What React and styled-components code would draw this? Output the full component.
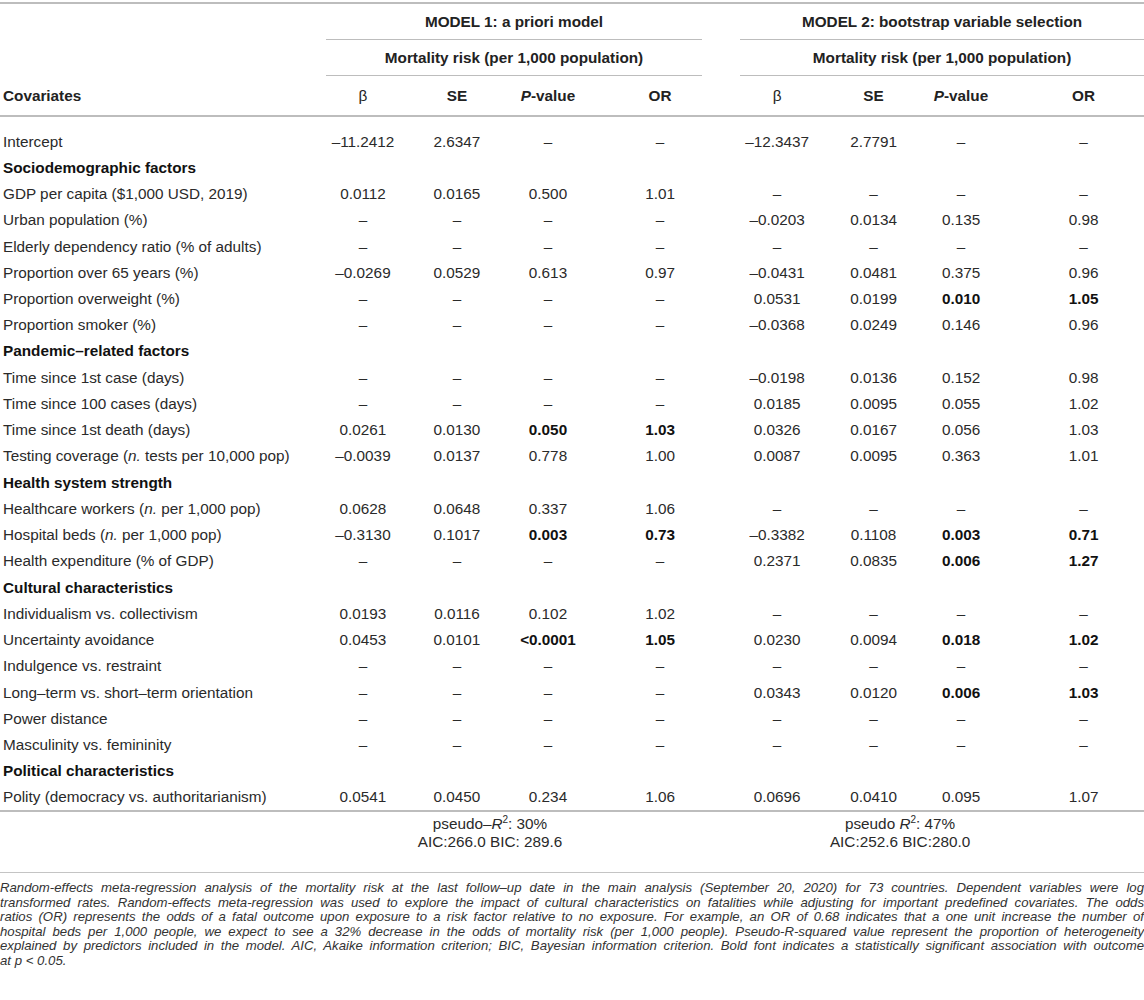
import styled, { createGlobalStyle } from 'styled-components'

const GlobalStyle = createGlobalStyle`
  html, body {
    margin: 0;
    padding: 0;
    background: #ffffff;
  }
  body {
    padding-top: 2px;
    font-family: "Liberation Sans", Arial, Helvetica, sans-serif;
    color: #222222;
  }
`

// column widths picked so the text centres sit where they are in the figure
const columns = [
  { w: 326 },
  { w: 74 }, { w: 114 }, { w: 68 }, { w: 156 },
  { w: 78 }, { w: 115 }, { w: 60 }, { w: 153, pl: 32 },
]

const Page = styled.div`
  width: 1144px;
`

const Table = styled.table`
  width: 1144px;
  table-layout: fixed;
  border-collapse: separate;
  border-spacing: 0;
  border-top: 2px solid #bdbdbd;
  font-size: 15.3px;
  line-height: 17px;
`

const Th = styled.th`
  padding: 0;
  padding-left: ${p => p.$pl || 0}px;
  font-weight: 700;
  text-align: ${p => p.$left ? 'left' : 'center'};
  vertical-align: middle;
  white-space: nowrap;
`

const HeadBand = styled.div`
  padding: 9px 0;
  margin-right: ${p => p.$trim || 0}px;
  margin-left: ${p => p.$lead || 0}px;
  border-bottom: 1px solid #bdbdbd;
  text-align: center;
`

const ColHead = styled(Th)`
  height: 39px;
  border-bottom: 2px solid #bdbdbd;
  padding-left: ${p => p.$left ? 3 : (p.$pl || 0)}px;
`

const Beta = styled.span`
  font-weight: 400;
`

const Row = styled.tr``

const Td = styled.td`
  padding: 0;
  padding-left: ${p => p.$pl || 0}px;
  padding-top: ${p => p.$first ? 11 : 0}px;
  height: 26.24px;
  text-align: center;
  vertical-align: middle;
  white-space: nowrap;
  font-weight: ${p => p.$bold ? 700 : 400};
  color: ${p => p.$bold ? '#111111' : '#2a2a2a'};
`

const Label = styled(Td)`
  text-align: left;
  padding-left: 3px;
`

const FootCell = styled.td`
  padding: 3px ${p => p.$pr || 0}px 21px 0;
  border-top: 2px solid #bdbdbd;
  border-bottom: 1px solid #c4c4c4;
  text-align: center;
  vertical-align: top;
  line-height: 18px;
  color: #2a2a2a;
  white-space: nowrap;

  sup {
    font-size: 10px;
    line-height: 0;
  }
`

const Caption = styled.div`
  padding-top: 8px;
  font-size: 13.2px;
  line-height: 14.5px;
  font-style: italic;
  color: #333333;
`

const CaptionLine = styled.div`
  text-align: justify;
  text-align-last: ${p => p.$last ? 'left' : 'justify'};
  white-space: nowrap;
`

const D = '–'
const b = v => ({ v, bold: true })
const none = [D, D, D, D]

const rows = [
  { label: 'Intercept', m1: ['–11.2412', '2.6347', D, D], m2: ['–12.3437', '2.7791', D, D] },
  { section: 'Sociodemographic factors' },
  { label: 'GDP per capita ($1,000 USD, 2019)', m1: ['0.0112', '0.0165', '0.500', '1.01'], m2: none },
  { label: 'Urban population (%)', m1: none, m2: ['–0.0203', '0.0134', '0.135', '0.98'] },
  { label: 'Elderly dependency ratio (% of adults)', m1: none, m2: none },
  { label: 'Proportion over 65 years (%)', m1: ['–0.0269', '0.0529', '0.613', '0.97'], m2: ['–0.0431', '0.0481', '0.375', '0.96'] },
  { label: 'Proportion overweight (%)', m1: none, m2: ['0.0531', '0.0199', b('0.010'), b('1.05')] },
  { label: 'Proportion smoker (%)', m1: none, m2: ['–0.0368', '0.0249', '0.146', '0.96'] },
  { section: 'Pandemic–related factors' },
  { label: 'Time since 1st case (days)', m1: none, m2: ['–0.0198', '0.0136', '0.152', '0.98'] },
  { label: 'Time since 100 cases (days)', m1: none, m2: ['0.0185', '0.0095', '0.055', '1.02'] },
  { label: 'Time since 1st death (days)', m1: ['0.0261', '0.0130', b('0.050'), b('1.03')], m2: ['0.0326', '0.0167', '0.056', '1.03'] },
  { label: <>Testing coverage (<i>n.</i> tests per 10,000 pop)</>, m1: ['–0.0039', '0.0137', '0.778', '1.00'], m2: ['0.0087', '0.0095', '0.363', '1.01'] },
  { section: 'Health system strength' },
  { label: <>Healthcare workers (<i>n.</i> per 1,000 pop)</>, m1: ['0.0628', '0.0648', '0.337', '1.06'], m2: none },
  { label: <>Hospital beds (<i>n.</i> per 1,000 pop)</>, m1: ['–0.3130', '0.1017', b('0.003'), b('0.73')], m2: ['–0.3382', '0.1108', b('0.003'), b('0.71')] },
  { label: 'Health expenditure (% of GDP)', m1: none, m2: ['0.2371', '0.0835', b('0.006'), b('1.27')] },
  { section: 'Cultural characteristics' },
  { label: 'Individualism vs. collectivism', m1: ['0.0193', '0.0116', '0.102', '1.02'], m2: none },
  { label: 'Uncertainty avoidance', m1: ['0.0453', '0.0101', b('<0.0001'), b('1.05')], m2: ['0.0230', '0.0094', b('0.018'), b('1.02')] },
  { label: 'Indulgence vs. restraint', m1: none, m2: none },
  { label: 'Long–term vs. short–term orientation', m1: none, m2: ['0.0343', '0.0120', b('0.006'), b('1.03')] },
  { label: 'Power distance', m1: none, m2: none },
  { label: 'Masculinity vs. femininity', m1: none, m2: none },
  { section: 'Political characteristics' },
  { label: 'Polity (democracy vs. authoritarianism)', m1: ['0.0541', '0.0450', '0.234', '1.06'], m2: ['0.0696', '0.0410', '0.095', '1.07'] },
]

const captionLines = [
  'Random-effects meta-regression analysis of the mortality risk at the last follow–up date in the main analysis (September 20, 2020) for 73 countries. Dependent variables were log',
  'transformed rates. Random-effects meta-regression was used to explore the impact of cultural characteristics on fatalities while adjusting for important predefined covariates. The odds',
  'ratios (OR) represents the odds of a fatal outcome upon exposure to a risk factor relative to no exposure. For example, an OR of 0.68 indicates that a one unit increase the number of',
  'hospital beds per 1,000 people, we expect to see a 32% decrease in the odds of mortality risk (per 1,000 people). Pseudo-R-squared value represent the proportion of heterogeneity',
  'explained by predictors included in the model. AIC, Akaike information criterion; BIC, Bayesian information criterion. Bold font indicates a statistically significant association with outcome',
  'at p < 0.05.',
]

function ValueCells({ values, offset, first }) {
  return values.map((cell, i) => {
    const item = typeof cell === 'string' ? { v: cell } : cell
    return (
      <Td key={i} $first={first} $bold={item.bold} $pl={columns[offset + i].pl}>
        {item.v}
      </Td>
    )
  })
}

function StatHeads({ offset }) {
  return (
    <>
      <ColHead $pl={columns[offset].pl}><Beta>β</Beta></ColHead>
      <ColHead $pl={columns[offset + 1].pl}>SE</ColHead>
      <ColHead $pl={columns[offset + 2].pl}><i>P</i>-value</ColHead>
      <ColHead $pl={columns[offset + 3].pl}>OR</ColHead>
    </>
  )
}

export default function App() {
  return (
    <Page>
      <GlobalStyle />
      <Table>
        <colgroup>
          {columns.map((c, i) => <col key={i} style={{ width: c.w }} />)}
        </colgroup>
        <thead>
          <tr>
            <Th />
            <Th colSpan={4}><HeadBand $trim={36}>MODEL 1: a priori model</HeadBand></Th>
            <Th colSpan={4}><HeadBand $lead={2}>MODEL 2: bootstrap variable selection</HeadBand></Th>
          </tr>
          <tr>
            <Th />
            <Th colSpan={4}><HeadBand $trim={36}>Mortality risk (per 1,000 population)</HeadBand></Th>
            <Th colSpan={4}><HeadBand $lead={2}>Mortality risk (per 1,000 population)</HeadBand></Th>
          </tr>
          <tr>
            <ColHead $left>Covariates</ColHead>
            <StatHeads offset={1} />
            <StatHeads offset={5} />
          </tr>
        </thead>
        <tbody>
          {rows.map((r, i) => (
            <Row key={i}>
              {r.section ? (
                <Label $first={i === 0} $bold colSpan={9}>{r.section}</Label>
              ) : (
                <>
                  <Label $first={i === 0}>{r.label}</Label>
                  <ValueCells values={r.m1} offset={1} first={i === 0} />
                  <ValueCells values={r.m2} offset={5} first={i === 0} />
                </>
              )}
            </Row>
          ))}
        </tbody>
        <tfoot>
          <tr>
            <FootCell />
            <FootCell colSpan={4} $pr={84}>
              pseudo–<i>R</i><sup>2</sup>: 30%<br />AIC:266.0 BIC: 289.6
            </FootCell>
            <FootCell colSpan={4} $pr={82}>
              pseudo <i>R</i><sup>2</sup>: 47%<br />AIC:252.6 BIC:280.0
            </FootCell>
          </tr>
        </tfoot>
      </Table>
      <Caption>
        {captionLines.map((line, i) => (
          <CaptionLine key={i} $last={i === captionLines.length - 1}>
            {i === captionLines.length - 1 ? <>at <i>p</i> &lt; 0.05.</> : line}
          </CaptionLine>
        ))}
      </Caption>
    </Page>
  )
}
